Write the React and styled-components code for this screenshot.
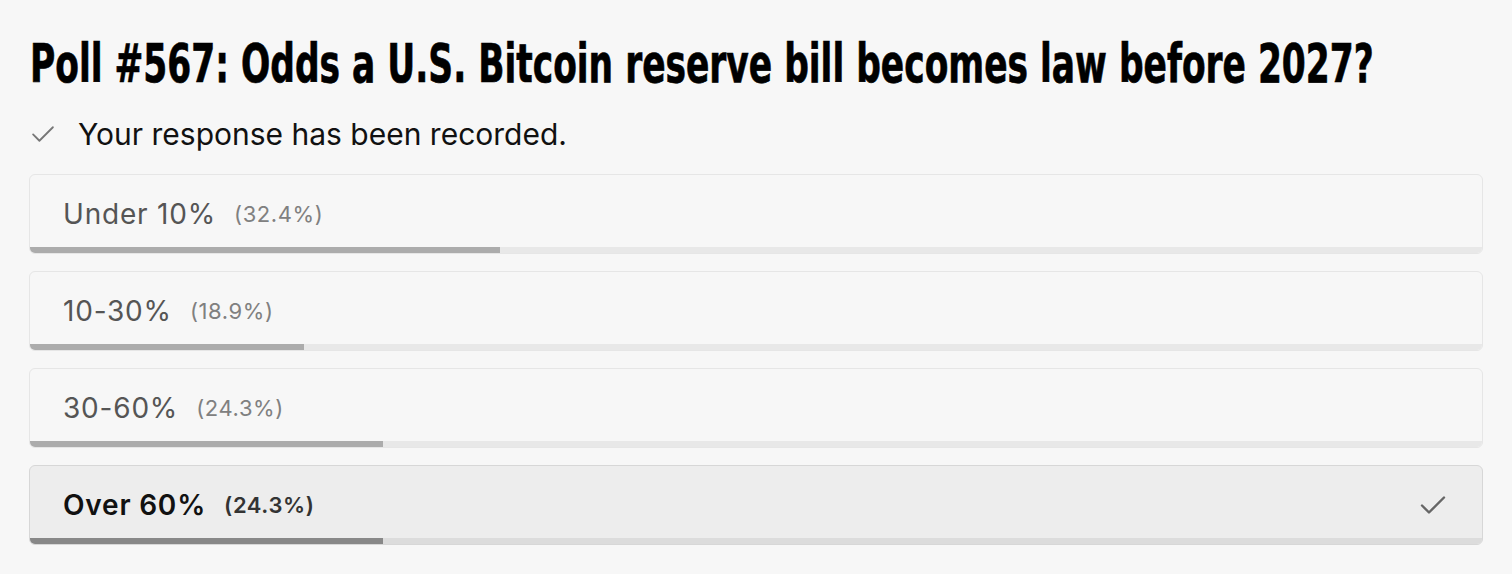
import React from 'react';
import styled, { createGlobalStyle } from 'styled-components';

const GlobalStyle = createGlobalStyle`
  body {
    margin: 0;
    background: #f7f7f7;
  }
`;

const Page = styled.div`
  padding: 34px 29px 0 29px;
  font-family: Inter, "Liberation Sans", sans-serif;
`;

const Title = styled.h1`
  margin: 0 0 0 1px;
  width: 1340px;
  font-family: "DejaVu Sans Condensed", "DejaVu Sans", sans-serif;
  font-weight: 700;
  font-size: 54px;
  line-height: 60px;
  color: #000;
  white-space: nowrap;
  -webkit-text-stroke: 0.7px #000;
  transform: scaleX(0.709);
  transform-origin: left center;
`;

const Recorded = styled.div`
  display: flex;
  align-items: center;
  gap: 23px;
  margin: 22px 0 22px 2px;
  font-size: 30px;
  line-height: 36px;
  color: #111;
`;

const RecordedTick = styled.span`
  display: flex;
  color: #777;
`;

const OptionList = styled.div`
  display: flex;
  flex-direction: column;
  gap: 17px;
`;

const OptionCard = styled.div`
  display: flex;
  flex-direction: column;
  border: 1px solid ${({ $chosen }) => ($chosen ? '#d7d7d7' : '#e6e6e6')};
  border-radius: 6px;
  background: ${({ $chosen }) => ($chosen ? '#ededed' : '#f7f7f7')};
  overflow: hidden;
`;

const OptionBody = styled.div`
  display: flex;
  align-items: center;
  height: 72px;
  box-sizing: border-box;
  padding: 6px 36px 0 33px;
`;

const Label = styled.span`
  font-size: 28px;
  line-height: 34px;
  letter-spacing: 0.8px;
  font-weight: ${({ $chosen }) => ($chosen ? 600 : 400)};
  color: ${({ $chosen }) => ($chosen ? '#111' : '#555')};
`;

const Share = styled.span`
  margin-left: 18px;
  font-size: 22px;
  line-height: 34px;
  letter-spacing: 0.6px;
  font-weight: ${({ $chosen }) => ($chosen ? 600 : 400)};
  color: ${({ $chosen }) => ($chosen ? '#333' : '#808080')};
`;

const ChosenTick = styled.span`
  margin-left: auto;
  display: flex;
  color: #666;
`;

const Track = styled.div`
  height: 6px;
  background: ${({ $chosen }) => ($chosen ? '#dcdcdc' : '#e8e8e8')};
`;

const Fill = styled.div`
  height: 100%;
  background: ${({ $chosen }) => ($chosen ? '#888888' : '#acacac')};
`;

const options = [
  { label: 'Under 10%', share: 32.4 },
  { label: '10-30%', share: 18.9 },
  { label: '30-60%', share: 24.3 },
  { label: 'Over 60%', share: 24.3, chosen: true },
];

const CheckMark = ({ width = 26, height = 20, stroke = 2 }) => (
  <svg width={width} height={height} viewBox="0 0 26 20" fill="none">
    <polyline
      points="2,10.5 9,17.5 24,2.5"
      stroke="currentColor"
      strokeWidth={stroke}
      strokeLinecap="round"
      strokeLinejoin="round"
    />
  </svg>
);

const App = () => {
  return (
    <>
      <GlobalStyle />
      <Page>
        <Title>Poll #567: Odds a U.S. Bitcoin reserve bill becomes law before 2027?</Title>
        <Recorded>
          <RecordedTick>
            <CheckMark width={24} height={18} stroke={2} />
          </RecordedTick>
          Your response has been recorded.
        </Recorded>
        <OptionList>
          {options.map((o) => (
            <OptionCard key={o.label} $chosen={o.chosen}>
              <OptionBody>
                <Label $chosen={o.chosen}>{o.label}</Label>
                <Share $chosen={o.chosen}>({o.share}%)</Share>
                {o.chosen && (
                  <ChosenTick>
                    <CheckMark width={26} height={20} stroke={2.4} />
                  </ChosenTick>
                )}
              </OptionBody>
              <Track $chosen={o.chosen}>
                <Fill $chosen={o.chosen} style={{ width: `${o.share}%` }} />
              </Track>
            </OptionCard>
          ))}
        </OptionList>
      </Page>
    </>
  );
};

export default App;
